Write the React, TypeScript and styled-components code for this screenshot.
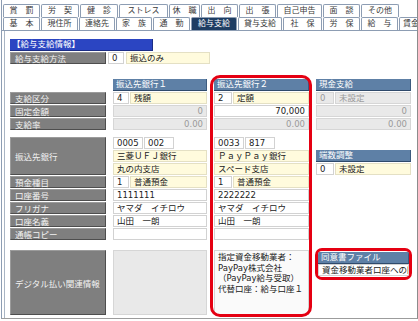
import React from "react";
import styled, { createGlobalStyle } from "styled-components";

const GlobalStyle = createGlobalStyle`
  *, *::before, *::after { box-sizing: border-box; }
  html, body { margin: 0; padding: 0; background: #ffffff; }
  body {
    font-family: "DejaVu Sans", "Noto Sans CJK JP", sans-serif;
    color: #222;
  }
`;

type Tone = "white" | "yellow" | "gray";

const tabsTop: [string, number][] = [
  ["賞　罰", 37],
  ["労　契", 38],
  ["健　診", 38],
  ["ストレス", 49],
  ["休　職", 31],
  ["出　向", 37],
  ["出　張", 37],
  ["自己申告", 45],
  ["面　談", 37],
  ["その他", 38],
];

const tabsBottom: [string, number][] = [
  ["基　本", 37],
  ["現住所", 37],
  ["連絡先", 36],
  ["家　族", 36],
  ["通　勤", 37],
  ["給与支給", 46],
  ["貸与支給", 44],
  ["社　保", 39],
  ["労　保", 37],
  ["給　与", 37],
  ["賃金台帳", 40],
];

const App = () => {
  return (
    <>
      <GlobalStyle />
      <Frame>
        <TabStrip>
          <TabRow>
            {tabsTop.map(([label, w]) => (
              <Tab key={label} $w={w}>
                {label}
              </Tab>
            ))}
          </TabRow>
          <TabRow>
            {tabsBottom.map(([label, w]) => (
              <Tab key={label} $w={w} $active={label === "給与支給"}>
                {label}
              </Tab>
            ))}
          </TabRow>
        </TabStrip>

        <Body>
          <SectionTitle>【給与支給情報】</SectionTitle>
          <MethodRow>
            <Label>給与支給方法</Label>
            <Field $tone="white" $w={16}>0</Field>
            <Field $tone="yellow" $w={84}>振込のみ</Field>
          </MethodRow>

          <Grid>
            {/* labels */}
            <Slot $c={1} $r="2"><Label>支給区分</Label></Slot>
            <Slot $c={1} $r="3"><Label>固定金額</Label></Slot>
            <Slot $c={1} $r="4"><Label>支給率</Label></Slot>
            <Slot $c={1} $r="6 / 9"><Label>振込先銀行</Label></Slot>
            <Slot $c={1} $r="9"><Label>預金種目</Label></Slot>
            <Slot $c={1} $r="10"><Label>口座番号</Label></Slot>
            <Slot $c={1} $r="11"><Label>フリガナ</Label></Slot>
            <Slot $c={1} $r="12"><Label>口座名義</Label></Slot>
            <Slot $c={1} $r="13"><Label>通帳コピー</Label></Slot>
            <Slot $c={1} $r="15"><Label>デジタル払い関連情報</Label></Slot>

            {/* bank 1 */}
            <Slot $c={2} $r="1"><ColHead>振込先銀行１</ColHead></Slot>
            <Slot $c={2} $r="2">
              <Pair>
                <Field $tone="white" $w={16}>4</Field>
                <Field $tone="yellow">残額</Field>
              </Pair>
            </Slot>
            <Slot $c={2} $r="3"><Field $tone="gray" $align="right">0</Field></Slot>
            <Slot $c={2} $r="4"><Field $tone="gray" $align="right">0.00</Field></Slot>
            <Slot $c={2} $r="6">
              <Pair>
                <Field $tone="white" $w={30}>0005</Field>
                <Field $tone="white" $w={30}>002</Field>
              </Pair>
            </Slot>
            <Slot $c={2} $r="7"><Field $tone="yellow">三菱ＵＦＪ銀行</Field></Slot>
            <Slot $c={2} $r="8"><Field $tone="yellow">丸の内支店</Field></Slot>
            <Slot $c={2} $r="9">
              <Pair>
                <Field $tone="white" $w={16}>1</Field>
                <Field $tone="yellow">普通預金</Field>
              </Pair>
            </Slot>
            <Slot $c={2} $r="10"><Field $tone="white">1111111</Field></Slot>
            <Slot $c={2} $r="11"><Field $tone="white">ヤマダ　イチロウ</Field></Slot>
            <Slot $c={2} $r="12"><Field $tone="white">山田　一朗</Field></Slot>
            <Slot $c={2} $r="13"><Field $tone="white" /></Slot>
            <Slot $c={2} $r="15"><Field $tone="gray" /></Slot>

            {/* bank 2 */}
            <Slot $c={3} $r="1"><ColHead>振込先銀行２</ColHead></Slot>
            <Slot $c={3} $r="2">
              <Pair>
                <Field $tone="white" $w={18}>2</Field>
                <Field $tone="yellow">定額</Field>
              </Pair>
            </Slot>
            <Slot $c={3} $r="3"><Field $tone="white" $align="right">70,000</Field></Slot>
            <Slot $c={3} $r="4"><Field $tone="gray" $align="right">0.00</Field></Slot>
            <Slot $c={3} $r="6">
              <Pair>
                <Field $tone="white" $w={30}>0033</Field>
                <Field $tone="white" $w={30}>817</Field>
              </Pair>
            </Slot>
            <Slot $c={3} $r="7"><Field $tone="yellow">ＰａｙＰａｙ銀行</Field></Slot>
            <Slot $c={3} $r="8"><Field $tone="yellow">スペード支店</Field></Slot>
            <Slot $c={3} $r="9">
              <Pair>
                <Field $tone="white" $w={18}>1</Field>
                <Field $tone="yellow">普通預金</Field>
              </Pair>
            </Slot>
            <Slot $c={3} $r="10"><Field $tone="white">2222222</Field></Slot>
            <Slot $c={3} $r="11"><Field $tone="white">ヤマダ　イチロウ</Field></Slot>
            <Slot $c={3} $r="12"><Field $tone="white">山田　一朗</Field></Slot>
            <Slot $c={3} $r="13"><Field $tone="white" /></Slot>
            <Slot $c={3} $r="15">
              <Note>
                {"指定資金移動業者：\nPayPay株式会社\n（PayPay給与受取）\n代替口座：給与口座１"}
              </Note>
            </Slot>
            <Highlight />

            {/* cash */}
            <Slot $c={4} $r="1"><ColHead>現金支給</ColHead></Slot>
            <Slot $c={4} $r="2">
              <Pair>
                <Field $tone="gray" $w={18}>0</Field>
                <Field $tone="gray">未設定</Field>
              </Pair>
            </Slot>
            <Slot $c={4} $r="3"><Field $tone="gray" $align="right">0</Field></Slot>
            <Slot $c={4} $r="4"><Field $tone="gray" $align="right">0.00</Field></Slot>
            <Slot $c={4} $r="7"><ColHead>端数調整</ColHead></Slot>
            <Slot $c={4} $r="8">
              <Pair>
                <Field $tone="white" $w={18}>0</Field>
                <Field $tone="yellow">未設定</Field>
              </Pair>
            </Slot>
            <Slot $c={4} $r="15">
              <ConsentBox>
                <ColHead>同意書ファイル</ColHead>
                <Field $tone="white" $h={13}>資金移動業者口座への同意書</Field>
              </ConsentBox>
            </Slot>
          </Grid>
        </Body>
      </Frame>
    </>
  );
};

export default App;

/* Styled Components */
const Frame = styled.div`
  width: 417px;
  height: 319px;
  margin-left: 1px;
  border-left: 1px solid #8d9db3;
  border-right: 1px solid #8c8c8c;
  border-bottom: 1px solid #9c9c9c;
  display: flex;
  flex-direction: column;
  overflow: hidden;
`;

const TabStrip = styled.div`
  padding: 4px 0 0 1px;
  display: flex;
  flex-direction: column;
  border-bottom: 1px solid #8d9db3;
`;

const TabRow = styled.div`
  display: flex;
  height: 13px;
`;

const Tab = styled.div<{ $w: number; $active?: boolean }>`
  flex: none;
  width: ${({ $w }) => $w}px;
  height: 13px;
  margin-right: 1px;
  border: 1px solid #8d9db3;
  border-bottom: none;
  border-radius: 2px 2px 0 0;
  background: ${({ $active }) => ($active ? "#1e3d63" : "#ffffff")};
  color: ${({ $active }) => ($active ? "#ffffff" : "#3a3a3a")};
  font-size: 8px;
  line-height: 12px;
  text-align: center;
  white-space: nowrap;
  overflow: hidden;
`;

const Body = styled.div`
  flex: 1;
  margin-left: 2px;
  border-left: 1px solid #a9b5c4;
  padding: 8px 0 0 5px;
`;

const SectionTitle = styled.div`
  width: 143px;
  height: 12px;
  background: #2b45c2;
  border-right: 1px solid #1b2d85;
  border-bottom: 1px solid #1b2d85;
  color: #ffffff;
  font-size: 8.5px;
  line-height: 11px;
  padding-left: 2px;
  white-space: nowrap;
`;

const MethodRow = styled.div`
  display: flex;
  gap: 2px;
  height: 12px;
  margin-top: 1px;
  margin-bottom: 15px;

  & > :first-child {
    width: 96px;
  }
`;

const Grid = styled.div`
  display: grid;
  grid-template-columns: 96px 94px 95px 95px;
  grid-template-rows: 12px 12px 12px 12px 5px 12px 12px 12px 12px 12px 12px 12px 12px 8px 65px;
  column-gap: 7px;
  row-gap: 1px;
`;

const Slot = styled.div<{ $c: number; $r: string }>`
  grid-column: ${({ $c }) => $c};
  grid-row: ${({ $r }) => $r};
  display: flex;
  flex-direction: column;
  min-width: 0;

  & > * {
    flex: 1;
  }
`;

const Label = styled.div`
  display: flex;
  align-items: center;
  height: 100%;
  background: #7f7f7f;
  border: 1px solid #9b9b9b;
  border-right-color: #4e4e4e;
  border-bottom-color: #4e4e4e;
  color: #f2f2f2;
  font-size: 8.5px;
  padding-left: 4px;
  white-space: nowrap;
`;

const ColHead = styled.div`
  height: 12px;
  flex: none;
  background: #5e80a6;
  border-right: 1px solid #3d5b7f;
  border-bottom: 1px solid #2f4a6b;
  color: #ffffff;
  font-size: 8.5px;
  line-height: 11px;
  padding-left: 3px;
  white-space: nowrap;
`;

const Pair = styled.div`
  display: flex;
  gap: 1px;
  height: 100%;
`;

const toneBg: Record<Tone, string> = {
  white: "#ffffff",
  yellow: "#fffbdd",
  gray: "#e9e9e9",
};

const toneBorder: Record<Tone, string> = {
  white: "#d2d2d2",
  yellow: "#e4e0c4",
  gray: "#d6d6d6",
};

const Field = styled.div<{ $tone: Tone; $align?: "left" | "right"; $w?: number; $h?: number }>`
  flex: ${({ $w }) => ($w ? "none" : "1")};
  width: ${({ $w }) => ($w ? `${$w}px` : "auto")};
  height: ${({ $h }) => ($h ? `${$h}px` : "100%")};
  background: ${({ $tone }) => toneBg[$tone]};
  border: 1px solid ${({ $tone }) => toneBorder[$tone]};
  color: ${({ $tone }) => ($tone === "gray" ? "#9a9a9a" : "#222222")};
  font-size: 8.5px;
  line-height: 10px;
  padding: 0 3px;
  text-align: ${({ $align }) => $align || "left"};
  white-space: nowrap;
  overflow: hidden;
`;

const Note = styled.div`
  background: #fafafa;
  border: 1px solid #d4d4d4;
  font-size: 8.5px;
  line-height: 10.7px;
  padding: 1px 3px;
  white-space: pre-line;
  color: #222222;
`;

const Highlight = styled.div`
  grid-column: 3;
  grid-row: 1 / -1;
  margin: -4px -3px -2px -4px;
  border: 3px solid #e50012;
  border-radius: 10px;
  z-index: 2;
  pointer-events: none;
`;

const ConsentBox = styled.div`
  flex: none !important;
  display: flex;
  flex-direction: column;
  gap: 0;
  margin: -2px -1px 0;
  padding: 1px 0;
  border: 3px solid #e50012;
  border-radius: 7px;
  overflow: hidden;
`;
